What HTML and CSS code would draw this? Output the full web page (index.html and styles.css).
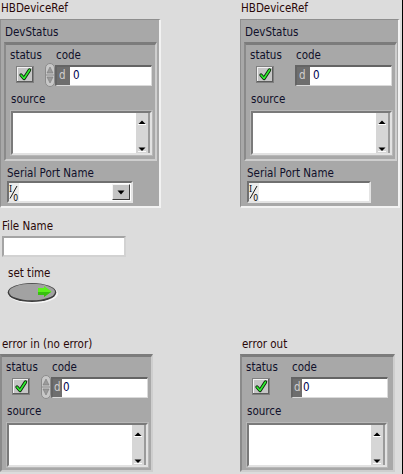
FILE: index.html
```html
<!DOCTYPE html>
<html>
<head>
<meta charset="utf-8">
<link rel="stylesheet" href="styles.css">
</head>
<body>
<div class="panel">
  <div class="toprow">
    <div class="col col-l">
      <div class="plabel">HBDeviceRef</div>
      <div class="ocl">
        <div class="clabel">DevStatus</div>
        <div class="err">
          <div class="labels"><span class="l-status">status</span><span class="l-code">code</span></div>
          <div class="ctrls">
            <span class="chk"><svg width="18" height="17" viewBox="0 0 18 17"><rect x="0" y="0" width="18" height="17" fill="#808080"/><rect x="1" y="1" width="16" height="15" fill="#5c5c5c"/><rect x="1" y="1" width="15" height="14" fill="#f2f2f2"/><rect x="2" y="2" width="14" height="13" fill="#c6c6c6"/><path d="M5 9 L8 12.5 L13.5 4" stroke="#0b2a0b" stroke-width="3.4" fill="none" stroke-linecap="round" stroke-linejoin="round"/><path d="M5 9 L8 12.5 L13.5 4" stroke="#2ef02e" stroke-width="1.6" fill="none" stroke-linecap="round" stroke-linejoin="round"/></svg></span>
            <span class="spin"><svg width="10" height="24" viewBox="0 0 10 24"><rect x="0.5" y="0.5" width="9" height="23" rx="4.5" fill="#c8c8c8" stroke="#8c8c8c"/><path d="M2 10 L5 4 L8 10 Z" fill="#9a9a9a" stroke="#7a7a7a" stroke-width="0.6"/><path d="M2 14 L5 20 L8 14 Z" fill="#9a9a9a" stroke="#7a7a7a" stroke-width="0.6"/><line x1="1" y1="12" x2="9" y2="12" stroke="#8c8c8c"/></svg></span>
            <span class="num wide"><span class="radix">d</span><span class="val">0</span></span>
          </div>
          <div class="l-source">source</div>
          <div class="str"><div class="txt"></div><div class="sb"><svg width="8" height="5" viewBox="0 0 8 5"><path d="M0.5 4 L4 0.5 L7.5 4 Z" fill="#000"/><line x1="0" y1="4.5" x2="8" y2="4.5" stroke="#fff"/></svg><svg width="8" height="5" viewBox="0 0 8 5"><path d="M0.5 0.5 L4 4 L7.5 0.5 Z" fill="#000"/><line x1="0" y1="4.6" x2="8" y2="4.6" stroke="#fff"/></svg></div></div>
        </div>
        <div class="clabel spn">Serial Port Name</div>
        <div class="visa">
          <span class="io"><svg width="10" height="18" viewBox="0 0 10 18"><text x="0" y="8.5" font-size="9" font-family="DejaVu Serif, serif" fill="#000">I</text><line x1="1" y1="15.5" x2="8" y2="3" stroke="#000" stroke-width="0.9"/><text x="4.2" y="17.5" font-size="8.5" font-family="DejaVu Sans, sans-serif" fill="#000">0</text></svg></span>
          <span class="field"></span>
          <span class="dd"><svg width="8" height="5" viewBox="0 0 8 5"><path d="M0.5 0.5 L4 4.5 L7.5 0.5 Z" fill="#000"/></svg></span>
        </div>
      </div>
    </div>
    <div class="col col-r">
      <div class="plabel">HBDeviceRef</div>
      <div class="ocl">
        <div class="clabel">DevStatus</div>
        <div class="err">
          <div class="labels"><span class="l-status">status</span><span class="l-code">code</span></div>
          <div class="ctrls">
            <span class="chk"><svg width="18" height="17" viewBox="0 0 18 17"><rect x="0" y="0" width="18" height="17" fill="#808080"/><rect x="1" y="1" width="16" height="15" fill="#5c5c5c"/><rect x="1" y="1" width="15" height="14" fill="#f2f2f2"/><rect x="2" y="2" width="14" height="13" fill="#c6c6c6"/><path d="M5 9 L8 12.5 L13.5 4" stroke="#0b2a0b" stroke-width="3.4" fill="none" stroke-linecap="round" stroke-linejoin="round"/><path d="M5 9 L8 12.5 L13.5 4" stroke="#2ef02e" stroke-width="1.6" fill="none" stroke-linecap="round" stroke-linejoin="round"/></svg></span>
            <span class="spin hidden"></span>
            <span class="num wide"><span class="radix">d</span><span class="val">0</span></span>
          </div>
          <div class="l-source">source</div>
          <div class="str"><div class="txt"></div><div class="sb"><svg width="8" height="5" viewBox="0 0 8 5"><path d="M0.5 4 L4 0.5 L7.5 4 Z" fill="#000"/><line x1="0" y1="4.5" x2="8" y2="4.5" stroke="#fff"/></svg><svg width="8" height="5" viewBox="0 0 8 5"><path d="M0.5 0.5 L4 4 L7.5 0.5 Z" fill="#000"/><line x1="0" y1="4.6" x2="8" y2="4.6" stroke="#fff"/></svg></div></div>
        </div>
        <div class="clabel spn">Serial Port Name</div>
        <div class="visa short">
          <span class="io"><svg width="10" height="18" viewBox="0 0 10 18"><text x="0" y="8.5" font-size="9" font-family="DejaVu Serif, serif" fill="#000">I</text><line x1="1" y1="15.5" x2="8" y2="3" stroke="#000" stroke-width="0.9"/><text x="4.2" y="17.5" font-size="8.5" font-family="DejaVu Sans, sans-serif" fill="#000">0</text></svg></span>
          <span class="field"></span>
        </div>
      </div>
    </div>
  </div>

  <div class="plabel fn">File Name</div>
  <div class="fstr"></div>
  <div class="plabel st">set time</div>
  <div class="btn"><svg width="54" height="23" viewBox="0 0 54 23"><ellipse cx="26" cy="11.5" rx="25" ry="10" fill="#f6f6f6"/><ellipse cx="25" cy="10.5" rx="24.3" ry="9.6" fill="#3e3e3e"/><ellipse cx="25" cy="10" rx="23" ry="8.3" fill="#a2a2a2"/><polygon points="31,6 37,6 37,4 44.5,9.5 37,15 37,13 31,13" fill="#5cf01c"/><polygon points="31,10 44,10 37,15 37,13 31,13" fill="#38c010"/></svg></div>

  <div class="botrow">
    <div class="col col-l">
      <div class="plabel bl">error in (no error)</div>
      <div class="err eb">
        <div class="labels"><span class="l-status">status</span><span class="l-code">code</span></div>
        <div class="ctrls">
          <span class="chk"><svg width="18" height="17" viewBox="0 0 18 17"><rect x="0" y="0" width="18" height="17" fill="#808080"/><rect x="1" y="1" width="16" height="15" fill="#5c5c5c"/><rect x="1" y="1" width="15" height="14" fill="#f2f2f2"/><rect x="2" y="2" width="14" height="13" fill="#c6c6c6"/><path d="M5 9 L8 12.5 L13.5 4" stroke="#0b2a0b" stroke-width="3.4" fill="none" stroke-linecap="round" stroke-linejoin="round"/><path d="M5 9 L8 12.5 L13.5 4" stroke="#2ef02e" stroke-width="1.6" fill="none" stroke-linecap="round" stroke-linejoin="round"/></svg></span>
          <span class="spin"><svg width="10" height="24" viewBox="0 0 10 24"><rect x="0.5" y="0.5" width="9" height="23" rx="4.5" fill="#c8c8c8" stroke="#8c8c8c"/><path d="M2 10 L5 4 L8 10 Z" fill="#9a9a9a" stroke="#7a7a7a" stroke-width="0.6"/><path d="M2 14 L5 20 L8 14 Z" fill="#9a9a9a" stroke="#7a7a7a" stroke-width="0.6"/><line x1="1" y1="12" x2="9" y2="12" stroke="#8c8c8c"/></svg></span>
          <span class="num"><span class="radix">d</span><span class="val">0</span></span>
        </div>
        <div class="l-source">source</div>
        <div class="str"><div class="txt"></div><div class="sb"><svg width="8" height="5" viewBox="0 0 8 5"><path d="M0.5 4 L4 0.5 L7.5 4 Z" fill="#000"/><line x1="0" y1="4.5" x2="8" y2="4.5" stroke="#fff"/></svg><svg width="8" height="5" viewBox="0 0 8 5"><path d="M0.5 0.5 L4 4 L7.5 0.5 Z" fill="#000"/><line x1="0" y1="4.6" x2="8" y2="4.6" stroke="#fff"/></svg></div></div>
      </div>
    </div>
    <div class="col col-r">
      <div class="plabel bl">error out</div>
      <div class="err eb eo">
        <div class="labels"><span class="l-status">status</span><span class="l-code">code</span></div>
        <div class="ctrls">
          <span class="chk"><svg width="18" height="17" viewBox="0 0 18 17"><rect x="0" y="0" width="18" height="17" fill="#808080"/><rect x="1" y="1" width="16" height="15" fill="#5c5c5c"/><rect x="1" y="1" width="15" height="14" fill="#f2f2f2"/><rect x="2" y="2" width="14" height="13" fill="#c6c6c6"/><path d="M5 9 L8 12.5 L13.5 4" stroke="#0b2a0b" stroke-width="3.4" fill="none" stroke-linecap="round" stroke-linejoin="round"/><path d="M5 9 L8 12.5 L13.5 4" stroke="#2ef02e" stroke-width="1.6" fill="none" stroke-linecap="round" stroke-linejoin="round"/></svg></span>
          <span class="spin hidden"></span>
          <span class="num"><span class="radix">d</span><span class="val">0</span></span>
        </div>
        <div class="l-source">source</div>
        <div class="str"><div class="txt"></div><div class="sb"><svg width="8" height="5" viewBox="0 0 8 5"><path d="M0.5 4 L4 0.5 L7.5 4 Z" fill="#000"/><line x1="0" y1="4.5" x2="8" y2="4.5" stroke="#fff"/></svg><svg width="8" height="5" viewBox="0 0 8 5"><path d="M0.5 0.5 L4 4 L7.5 0.5 Z" fill="#000"/><line x1="0" y1="4.6" x2="8" y2="4.6" stroke="#fff"/></svg></div></div>
      </div>
    </div>
  </div>
</div>
</body>
</html>
```
FILE: styles.css
```css
* { box-sizing: border-box; }
html, body { margin: 0; padding: 0; }
body {
  width: 403px;
  height: 474px;
  overflow: hidden;
  background: #dcdcdc;
  border-right: 1px solid #000;
  font-family: "DejaVu Sans Condensed", "DejaVu Sans", sans-serif;
  font-stretch: condensed;
  font-size: 11.5px;
  line-height: 14px;
  color: #10102a;
}
.panel { display: flex; flex-direction: column; height: 474px; }
.toprow, .botrow { display: flex; }
.col-l { width: 240px; flex-shrink: 0; }
.col-r { width: 162px; flex-shrink: 0; }

.plabel { height: 19px; padding: 1px 0 0 1px; color: #2a0808; white-space: nowrap; }
.plabel.fn { margin-top: 11px; height: 17px; padding: 0 0 0 2px; }
.plabel.st { margin-top: 9px; height: 16px; padding: 0 0 0 8px; }
.plabel.bl { height: 17px; padding: 0 0 0 2px; }
.botrow { margin-top: 33px; }

.ocl {
  height: 189px;
  background: #a8a8a8;
  border-style: solid;
  border-width: 1px 2px 2px 1px;
  border-color: #8e8e8e #f2f2f2 #f2f2f2 #8e8e8e;
  display: flex;
  flex-direction: column;
  align-items: flex-start;
}
.col-l .ocl { width: 161px; }
.col-r .ocl { width: 160px; }
.clabel { margin: 5px 0 0 4px; white-space: nowrap; }
.clabel.spn { margin: 5px 0 0 6px; }
.ocl .err { margin: 3px 0 0 3px; }

.err {
  width: 153px;
  height: 119px;
  flex-shrink: 0;
  background: #a8a8a8;
  border-style: solid;
  border-width: 3px 2px 2px 2px;
  border-color: #7c7c7c #cecece #cecece #8a8a8a;
  padding-top: 3px;
}
.err.eb { height: 118px; }
.err.eo { width: 155px; }
.labels { display: flex; height: 14px; white-space: nowrap; }
.l-status { margin-left: 4px; width: 46px; }
.ctrls { display: flex; align-items: flex-start; height: 22px; margin-top: 3px; }
.chk { display: block; width: 18px; height: 17px; margin: 1px 0 0 10px; }
.chk svg, .spin svg, .btn svg, .io svg, .dd svg, .sb svg { display: block; }
.spin { display: block; width: 10px; height: 24px; margin: -2px 0 0 11px; }
.spin.hidden { visibility: hidden; }
.num {
  display: flex;
  width: 97px;
  height: 21px;
  border-style: solid;
  border-width: 2px 1px 1px 2px;
  border-color: #646464 #dadada #dadada #646464;
  background: #6e6e6e;
}
.radix { display: block; width: 9px; flex-shrink: 0; color: #d0d0d0; padding-left: 1px; line-height: 17px; }
.num.wide .radix { width: 13px; padding-left: 2px; }
.val { display: block; flex: 1; background: #fff; color: #000050; padding-left: 1px; line-height: 17px; }
.num.wide .val { padding-left: 3px; }
.l-source { margin: 5px 0 0 5px; height: 14px; }
.str {
  display: flex;
  width: 141px;
  height: 44px;
  margin: 5px 0 0 5px;
  border-style: solid;
  border-width: 2px;
  border-color: #7a7a7a #e2e2e2 #e2e2e2 #7a7a7a;
  background: #fff;
  box-shadow: 0 0 0 1px #b8b8b8;
}
.eo .str { width: 140px; }
.txt { flex: 1; }
.sb {
  width: 15px;
  background: #d6d6d6;
  border-left: 1px solid #fff;
  border-right: 2px solid #9a9a9a;
  display: flex;
  flex-direction: column;
  justify-content: space-between;
  align-items: center;
  padding: 7px 0 1px;
}

.visa {
  display: flex;
  width: 126px;
  height: 22px;
  margin: 1px 0 0 6px;
  border-style: solid;
  border-width: 2px;
  border-color: #707070 #e4e4e4 #e4e4e4 #707070;
  background: #fff;
}
.visa.short { width: 124px; }
.io { width: 10px; background: #ececec; }
.field { flex: 1; }
.dd {
  width: 18px;
  height: 16px;
  margin: 1px 1px 0 0;
  background: #c4c4c4;
  border-style: solid;
  border-width: 1px;
  border-color: #f4f4f4 #3c3c3c #3c3c3c #f4f4f4;
  display: flex;
  align-items: center;
  justify-content: center;
}

.fstr {
  width: 124px;
  height: 21px;
  margin-left: 2px;
  background: #fff;
  border-style: solid;
  border-width: 2px;
  border-color: #a4a4a4 #d2d2d2 #d2d2d2 #a4a4a4;
}
.btn { height: 22px; margin-left: 7px; }
```
